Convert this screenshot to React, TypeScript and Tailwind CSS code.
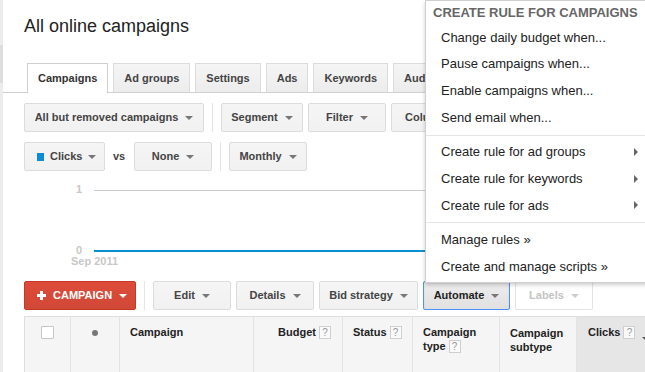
import React from 'react';

const Arrow = ({ className = 'border-t-[#777]' }: { className?: string }) => (
  <span className={`inline-block w-0 h-0 border-x-[4px] border-x-transparent border-t-[4px] ${className}`} />
);

const RightArrow = () => (
  <span className="inline-block w-0 h-0 border-y-[4px] border-y-transparent border-l-[4px] border-l-[#666]" />
);

interface BtnProps {
  label: string;
  w: string;
  variant?: 'normal' | 'pressed' | 'disabled';
}

const Btn: React.FC<BtnProps> = ({ label, w, variant = 'normal' }) => {
  const look =
    variant === 'pressed'
      ? 'border-[#4d90fe] bg-linear-to-b from-[#eeeeee] to-[#e0e0e0] text-[#222] shadow-[inset_0_1px_2px_rgba(0,0,0,0.1)]'
      : variant === 'disabled'
        ? 'border-[#e3e3e3] bg-white text-[#c4c4c4]'
        : 'border-[#dcdcdc] bg-linear-to-b from-[#f5f5f5] to-[#f1f1f1] text-[#444]';
  return (
    <div className={`h-[29px] ${w} shrink-0 flex items-center justify-center gap-[7px] rounded-[2px] border text-[11px] font-bold ${look}`}>
      <span>{label}</span>
      <Arrow className={variant === 'disabled' ? 'border-t-[#ccc]' : 'border-t-[#777]'} />
    </div>
  );
};

const Sep = () => <div className="w-px h-[29px] bg-[#e5e5e5] shrink-0" />;

const Help = () => (
  <span className="inline-flex items-center justify-center w-[12px] h-[13px] border border-[#cfcfcf] bg-[#fafafa] text-[10px] font-normal text-[#999] leading-none">?</span>
);

const tabs = ['Campaigns', 'Ad groups', 'Settings', 'Ads', 'Keywords', 'Audiences'];

const menuTop = ['Change daily budget when...', 'Pause campaigns when...', 'Enable campaigns when...', 'Send email when...'];
const menuSub = ['Create rule for ad groups', 'Create rule for keywords', 'Create rule for ads'];
const menuLinks = ['Manage rules »', 'Create and manage scripts »'];

export default function App() {
  return (
    <div className="relative w-[645px] h-[372px] overflow-hidden bg-white font-['Liberation_Sans',Arial,sans-serif]">
      <div className="flex h-full">
        <div className="w-[3px] shrink-0 flex flex-col bg-[#ececec]">
          <div className="h-[45px]" />
          <div className="h-[38px] bg-[#dedede]" />
        </div>

        <div className="flex-1 min-w-[720px]">
          <h1 className="pl-[21px] pt-[15px] text-[18px] leading-[22px] text-[#222]">All online campaigns</h1>

          <div className="mt-[26px] flex gap-[5px] pl-[24px] h-[30px] border-b border-[#d0d0d0]">
            {tabs.map((t, i) =>
              i === 0 ? (
                <div key={t} className="h-[30px] px-[10px] flex items-center bg-white border border-b-0 border-[#cfcfcf] text-[11px] font-bold text-[#333]">
                  {t}
                </div>
              ) : (
                <div key={t} className="h-[29px] px-[10px] flex items-center bg-linear-to-b from-[#f5f5f5] to-[#ececec] border border-b-0 border-[#dcdcdc] text-[11px] font-bold text-[#444]">
                  {t}
                </div>
              )
            )}
          </div>

          <div className="mt-[10px] pl-[21px] flex items-center">
            <Btn label="All but removed campaigns" w="w-[180px]" />
            <div className="mx-[8px]"><Sep /></div>
            <Btn label="Segment" w="w-[82px]" />
            <div className="w-[5px]" />
            <Btn label="Filter" w="w-[78px]" />
            <div className="w-[5px]" />
            <Btn label="Columns" w="w-[90px]" />
          </div>

          <div className="mt-[10px] pl-[21px] flex items-center">
            <div className="h-[29px] w-[81px] shrink-0 flex items-center gap-[6px] pl-[12px] rounded-[2px] border border-[#dcdcdc] bg-linear-to-b from-[#f5f5f5] to-[#f1f1f1] text-[11px] font-bold text-[#444]">
              <span className="w-[7px] h-[8px] bg-[#0b8ed1]" />
              <span>Clicks</span>
              <Arrow />
            </div>
            <span className="mx-[8px] w-[13px] text-[11px] font-bold text-[#444]">vs</span>
            <Btn label="None" w="w-[78px]" />
            <div className="mx-[8px]"><Sep /></div>
            <Btn label="Monthly" w="w-[78px]" />
          </div>

          <div className="relative h-[110px] text-[11px] font-bold leading-[13px] text-[#c8c8c8]">
            <span className="absolute right-[calc(100%-79px)] top-[12px]">1</span>
            <div className="absolute left-[91px] right-0 top-[19px] h-px bg-[#cccccc]" />
            <span className="absolute right-[calc(100%-79px)] top-[73px]">0</span>
            <div className="absolute left-[91px] right-0 top-[79px] h-[2px] bg-[#0b8ed1]" />
            <span className="absolute left-[68px] top-[84px]">Sep 2011</span>
          </div>

          <div className="pl-[21px] flex items-center">
            <div className="h-[29px] w-[112px] shrink-0 flex items-center gap-[7px] pl-[12px] rounded-[2px] border border-[#c53727] bg-linear-to-b from-[#dd4b39] to-[#d14836] text-[11px] font-bold text-white">
              <svg width="9" height="9" viewBox="0 0 9 9"><rect x="3" y="0" width="3" height="9" fill="#fff" /><rect x="0" y="3" width="9" height="3" fill="#fff" /></svg>
              <span>CAMPAIGN</span>
              <Arrow className="border-t-white" />
            </div>
            <div className="mx-[8px]"><Sep /></div>
            <Btn label="Edit" w="w-[78px]" />
            <div className="w-[5px]" />
            <Btn label="Details" w="w-[78px]" />
            <div className="w-[5px]" />
            <Btn label="Bid strategy" w="w-[99px]" />
            <div className="w-[5px]" />
            <Btn label="Automate" w="w-[87px]" variant="pressed" />
            <div className="w-[5px]" />
            <Btn label="Labels" w="w-[78px]" variant="disabled" />
          </div>

          <div className="mt-[6px] ml-[21px] flex h-[62px] border border-[#dedede] bg-[#f5f5f5] text-[11px] font-bold leading-[13px] text-[#222]">
            <div className="w-[46px] shrink-0 border-r border-[#e3e3e3] flex justify-center pt-[9px]">
              <span className="w-[13px] h-[13px] border border-[#c6c6c6] bg-white rounded-[1px]" />
            </div>
            <div className="w-[49px] shrink-0 border-r border-[#e3e3e3] flex justify-center pt-[13px]">
              <span className="w-[6px] h-[6px] rounded-full bg-[#777]" />
            </div>
            <div className="w-[134px] shrink-0 border-r border-[#e3e3e3] pl-[10px] pt-[9px]">Campaign</div>
            <div className="w-[89px] shrink-0 border-r border-[#e3e3e3] pr-[11px] pt-[9px] flex justify-end items-start gap-[3px]">
              <span>Budget</span>
              <Help />
            </div>
            <div className="w-[70px] shrink-0 border-r border-[#e3e3e3] pl-[10px] pt-[9px] flex items-start gap-[3px]">
              <span>Status</span>
              <Help />
            </div>
            <div className="w-[87px] shrink-0 border-r border-[#e3e3e3] pl-[10px] pt-[9px]">
              Campaign
              <div className="flex items-center gap-[3px] mt-[1px]">
                <span>type</span>
                <Help />
              </div>
            </div>
            <div className="w-[77px] shrink-0 border-r border-[#e3e3e3] pl-[10px] pt-[9px] leading-[14px]">
              Campaign
              <br />
              subtype
            </div>
            <div className="w-[90px] shrink-0 bg-[#e6e6e6] pl-[11px] pt-[9px] flex items-start gap-[3px]">
              <span>Clicks</span>
              <Help />
              <span className="ml-[4px] mt-[5px]"><Arrow className="border-t-[#555]" /></span>
            </div>
          </div>
        </div>
      </div>

      <div className="absolute left-[425px] top-0 w-[240px] pb-[2px] bg-white border border-[#cfcfcf] shadow-[0_2px_4px_rgba(0,0,0,0.2)] text-[13px] text-[#222]">
        <div className="h-[23px] pl-[7px] flex items-center text-[13px] font-bold text-[#666]">CREATE RULE FOR CAMPAIGNS</div>
        {menuTop.map((m) => (
          <div key={m} className="h-[26.7px] pl-[15px] flex items-center">{m}</div>
        ))}
        <div className="mt-[4px] mb-[3px] h-px bg-[#e5e5e5]" />
        {menuSub.map((m) => (
          <div key={m} className="h-[26.7px] pl-[15px] pr-[8px] w-[220px] flex items-center justify-between">
            <span>{m}</span>
            <RightArrow />
          </div>
        ))}
        <div className="mt-[3px] mb-[4px] h-px bg-[#e5e5e5]" />
        {menuLinks.map((m) => (
          <div key={m} className="h-[26.7px] pl-[15px] flex items-center">{m}</div>
        ))}
      </div>
    </div>
  );
}
